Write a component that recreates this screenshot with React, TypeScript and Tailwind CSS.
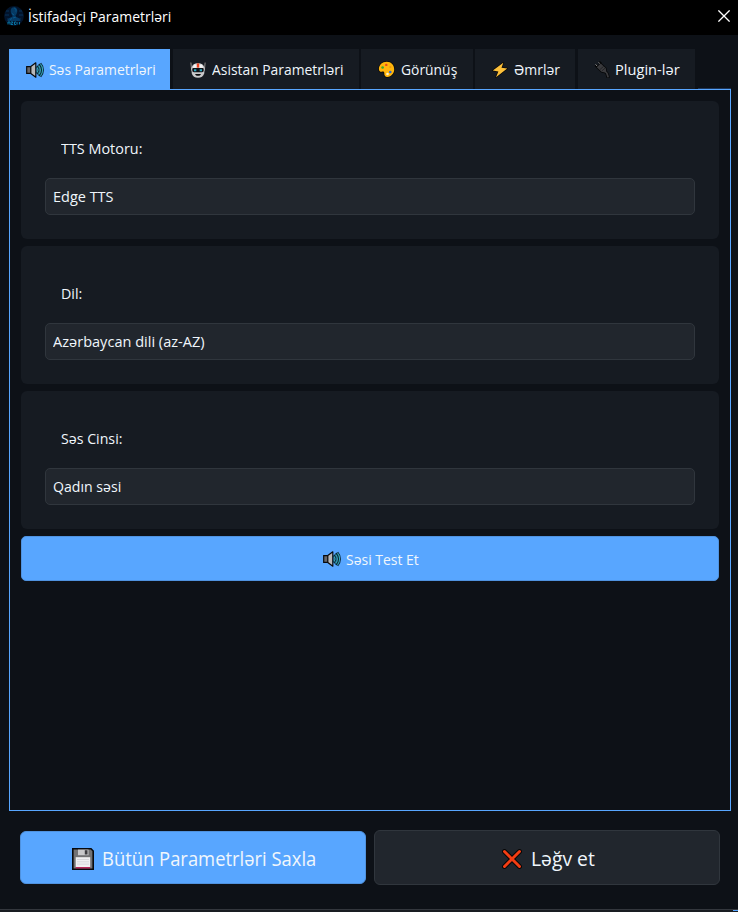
import type { ReactNode } from "react";

function Logo() {
  return (
    <svg width="20" height="20" viewBox="0 0 20 20" className="shrink-0">
      <circle cx="10" cy="10" r="9.9" fill="#02142c" />
      <path d="M2 5h3M1 9h4M15 5h3M15 9h4M3 13h3M14 13h3" stroke="#063158" strokeWidth="1" />
      <path d="M10 1.2c2.400 0 3.500 1.700 3.300 4-.1 1.900-.9 3.300-1.700 4.100v1.500c2 .8 4.400 1.200 5 4.200H3.400c.6-3 3-3.400 5-4.200V9.300C7.500 8.400 6.800 7 6.700 5.200 6.600 2.800 7.800 1.200 10 1.200z" fill="#053a64" />
      <path d="M10.300 2c1.600.6 2 2 1.600 3.600M8 7.500l2 1.500M9 12l3-1M6 13.500l2-1" stroke="#075f96" strokeWidth=".8" fill="none" />
      <path d="M4 16v2.500M4 16h2v2.500M7 16h2l-2 2.500h2M10.500 16v2.500h1.500M10.500 16h1.500M13 18.500V16M15.500 16v2.500" stroke="#087fae" strokeWidth=".9" fill="none" />
    </svg>
  );
}

function Speaker() {
  return (
    <svg width="18" height="16" viewBox="0 0 18 16" className="shrink-0">
      <path d="M.7 4.700h4.800v6.600H.7z" fill="#68686b" stroke="#080a0d" strokeWidth="1.200" />
      <path d="M4.800 4.600L9.800.8v14.400L4.800 11.400z" fill="#b8b8ba" stroke="#080a0d" strokeWidth="1.200" strokeLinejoin="round" />
      <path d="M10.500 4.500c2 2 2 5 0 7M12.500 2.500c3.300 3.200 3.300 7.800 0 11M14.200 1.700c3.300 3.700 3.300 8.900 0 12.600" stroke="#082533" strokeWidth="2.600" fill="none" />
      <path d="M10.800 5.500c1.500 1.500 1.500 3.500 0 5M12.500 3.500c2.600 2.600 2.600 6.400 0 9M14.500 2.200c2.800 3.400 2.800 8.200 0 11.600" stroke="#36a9bd" strokeWidth="1.100" fill="none" />
    </svg>
  );
}

function Robot() {
  return (
    <svg width="16" height="16" viewBox="0 0 16 16" className="shrink-0">
      <path d="M1 .5v7M15 .5v7" stroke="#090a0c" strokeWidth="2" />
      <path d="M.9.5l.6 8M15.100.5l-.6 8" stroke="#9c9c9e" strokeWidth="1" />
      <path d="M1.300 6.500C2 2.800 4.300 1.200 8 1.200s6 1.600 6.700 5.300l-.5 5c-.7 2.800-3 4.200-6.200 4.200s-5.500-1.400-6.200-4.200z" fill="#c8c8ca" />
      <path d="M4 2.500h2.700v3.300H2.800zM9.300 2.500H12l1.200 3.300H9.300z" fill="#f5f5f5" />
      <path d="M6.800 1.400h2.400v4.200H6.800z" fill="#ed4420" />
      <path d="M3.500 6h9c.8 0 1.200.5 1.200 1.200v1.300c0 1-.7 1.700-1.700 1.700H4c-1 0-1.700-.7-1.700-1.700V7.200C2.300 6.500 2.700 6 3.500 6z" fill="#101217" />
      <path d="M4 7.200h2.300v2H4zM9.700 7.200H12v2H9.700z" fill="#28a7c1" />
      <path d="M5 12h6c-.5 1.300-1.600 1.800-3 1.800S5.500 13.300 5 12z" fill="#08090b" />
    </svg>
  );
}

function Palette() {
  return (
    <svg width="17" height="17" viewBox="0 0 17 17" className="shrink-0">
      <path d="M8.800.8C4.200.8.9 4 .9 8c0 2.300 1.400 3.100 3 2.700 1.600-.4 2.500.2 2.400 1.600-.2 2.100.9 3.900 3.200 3.700 3.700-.4 6.700-3.500 6.700-7.500C16.200 4 13.200.8 8.800.8z" fill="#ffb50c" stroke="#0a0906" strokeWidth="1.400" paintOrder="stroke" />
      <circle cx="8.300" cy="3.900" r="1.200" fill="#e34a22" />
      <circle cx="4.600" cy="6.500" r="1.300" fill="#38a72f" />
      <circle cx="12.300" cy="6" r="1.100" fill="#f0980e" />
      <circle cx="12.300" cy="11" r="1.300" fill="#2e68d0" />
      <circle cx="9.500" cy="13" r="1.300" fill="#fff3d0" />
    </svg>
  );
}

function Bolt() {
  return (
    <svg width="16" height="16" viewBox="0 0 16 16" className="shrink-0">
      <path d="M11.300.8L.8 8.600l5.600.9L4 15.200 15.200 6.500l-5.700-.7z" fill="#fcc03b" stroke="#0b0a07" strokeWidth="1.500" strokeLinejoin="round" paintOrder="stroke" />
    </svg>
  );
}

function Plug() {
  return (
    <svg width="16" height="17" viewBox="0 0 16 17" className="shrink-0">
      <path d="M1.500 4l2 2M5 .9l2 2" stroke="#050607" strokeWidth="2.500" />
      <path d="M1.600 3.300l2 2.300M4.600 1.300l2 2.200" stroke="#a5a5a5" strokeWidth=".9" />
      <path d="M2.700 6.200l4-3.600 5.100 4.600.4 3.300c1.500.8 2 2.500 2.800 5.700l-1.700.3c-.8-3-1.300-4.400-2.400-4.900l-3.400-.8z" fill="#3a3a3d" stroke="#050607" strokeWidth="1.500" strokeLinejoin="round" paintOrder="stroke" />
      <path d="M6 8.500l3.700-3.200M8 9.800L11.200 7" stroke="#17181a" strokeWidth=".7" />
    </svg>
  );
}

function Floppy() {
  return (
    <svg width="22" height="22" viewBox="0 0 22 22" className="shrink-0">
      <path d="M.8.800h18.200l2.200 2.200v18.200H.8z" fill="#727274" stroke="#07090d" strokeWidth="1.600" />
      <path d="M6 1.600h10.500v5.600H6z" fill="#c8c8ca" />
      <path d="M12.800 2.200h2.700v4.300h-2.700z" fill="#3b3b3f" />
      <path d="M3.700 9.200h14.500v10H3.700z" fill="#f0f0f2" />
      <path d="M5 11.500h12M5 13.800h12M5 16.100h12" stroke="#d2d2d5" strokeWidth=".8" />
      <path d="M3.700 19.200h14.500v1.200H3.700z" fill="#c3114e" />
    </svg>
  );
}

function Cross() {
  return (
    <svg width="20" height="20" viewBox="0 0 20 20" className="shrink-0">
      <path d="M2.500 2.500l15 15M17.500 2.500l-15 15" stroke="#070606" strokeWidth="4.800" strokeLinecap="round" />
      <path d="M2.500 2.500l15 15M17.500 2.500l-15 15" stroke="#f43d13" strokeWidth="2.900" strokeLinecap="round" />
    </svg>
  );
}

function Text({ fit, children }: { fit: string; children: ReactNode }) {
  return <span className={`inline-block origin-left whitespace-nowrap ${fit}`}>{children}</span>;
}

type FieldProps = { label: string; labelFit: string; value: string; valueFit: string };

function Field({ label, labelFit, value, valueFit }: FieldProps) {
  return (
    <section className="h-[138px] rounded-md bg-[#161b22] px-6 pt-9">
      <label className="block h-[41px] pl-4 leading-[22px]"><Text fit={labelFit}>{label}</Text></label>
      <div className="flex h-[37px] items-center rounded-[5px] border border-[#30363d] bg-[#21262d] pl-[6.500px]"><Text fit={valueFit}>{value}</Text></div>
    </section>
  );
}

function Tab({ className, children }: { className: string; children: ReactNode }) {
  return <button className={`flex h-10 items-center bg-[#161b22] pt-px ${className}`}>{children}</button>;
}

export default function App() {
  return (
    <div className="flex h-[912px] w-[738px] flex-col overflow-hidden bg-[#0d1117] font-['Open_Sans','Noto_Sans',sans-serif] text-[15px] text-[#f0f6fc]">
      <header className="flex h-[35px] items-center bg-black pl-1 pr-2 text-white">
        <div className="pb-1"><Logo /></div>
        <h1 className="grow pb-[3px] pl-1"><Text fit="scale-x-[0.93]">İstifadəçi Parametrləri</Text></h1>
        <svg width="12" height="12" viewBox="0 0 12 12" className="mb-[3px]">
          <path d="M.4.400l11.200 11.200M11.600.4L.4 11.600" stroke="white" strokeWidth="1.300" />
        </svg>
      </header>
      <nav className="mt-[14px] flex h-10 pl-[9px]">
        <button className="flex h-[41px] w-[161px] items-center gap-[5px] bg-[#58a6ff] pl-[16.500px]"><Speaker /><Text fit="scale-x-[0.925]">Səs Parametrləri</Text></button>
        <Tab className="ml-[3px] w-[186px] gap-[6px] pl-[17px]"><Robot /><Text fit="scale-x-[0.925]">Asistan Parametrləri</Text></Tab>
        <Tab className="ml-[2px] w-[112px] gap-[5.500px] pl-[17px]"><Palette /><Text fit="scale-x-[0.925]">Görünüş</Text></Tab>
        <Tab className="ml-[2px] w-[100px] gap-[6px] pl-[17px]"><Bolt /><Text fit="scale-x-[0.93]">Əmrlər</Text></Tab>
        <Tab className="ml-[3px] w-[117px] gap-[5px] pl-4"><Plug /><Text fit="scale-x-[0.975]">Plugin-lər</Text></Tab>
        <div className="ml-[3px] h-px w-[33px] self-end bg-[#1d3557]" />
      </nav>
      <main className="mx-[9px] mr-[7px] flex h-[722px] flex-col gap-[7px] border border-[#58a6ff] px-[11px] pt-[11px]">
        <Field label="TTS Motoru:" labelFit="scale-x-[0.96]" value="Edge TTS" valueFit="scale-x-[0.965]" />
        <Field label="Dil:" labelFit="scale-x-[0.95]" value="Azərbaycan dili (az-AZ)" valueFit="scale-x-[0.97]" />
        <Field label="Səs Cinsi:" labelFit="scale-x-[0.945]" value="Qadın səsi" valueFit="scale-x-[0.94]" />
        <button className="flex h-[45px] items-center gap-[5px] rounded-[5px] border border-[#4f92df] bg-[#58a6ff] pl-[301px] pt-px"><Speaker /><Text fit="scale-x-[0.93]">Səsi Test Et</Text></button>
      </main>
      <footer className="mt-[19px] flex h-[55px] items-center gap-2 pl-5 text-[20px]">
        <button className="flex h-[53px] w-[346px] items-center gap-2 rounded-md border border-[#4f92df] bg-[#58a6ff] pl-[51px] pt-[2px]"><Floppy /><Text fit="scale-x-[0.92]">Bütün Parametrləri Saxla</Text></button>
        <button className="flex h-[55px] w-[346px] items-center gap-[9px] rounded-md border border-[#30363d] bg-[#21262d] pl-[127px] pt-[2px]"><Cross /><Text fit="scale-x-[0.965]">Ləğv et</Text></button>
      </footer>
      <div className="mt-6 flex h-[3px] justify-end border-t border-[#33373d] bg-[#191d22]"><div className="h-px w-[5px] bg-[#58a6ff]" /></div>
    </div>
  );
}
